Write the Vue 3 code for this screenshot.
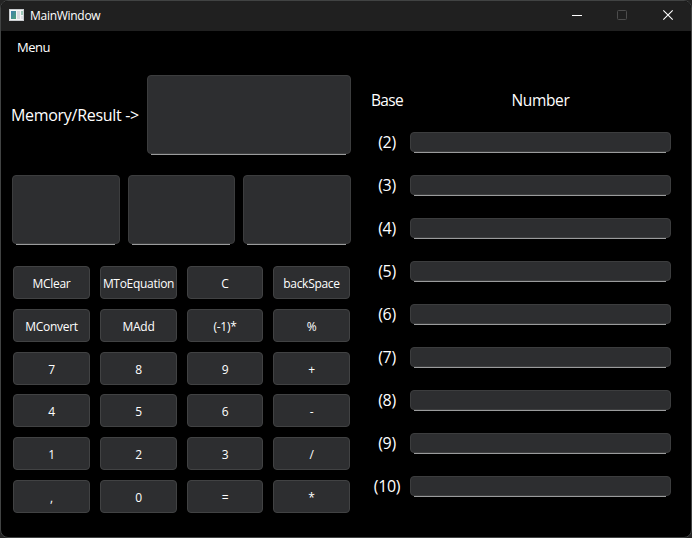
<script setup>
const keys = [
  'MClear', 'MToEquation', 'C', 'backSpace',
  'MConvert', 'MAdd', '(-1)*', '%',
  '7', '8', '9', '+',
  '4', '5', '6', '-',
  '1', '2', '3', '/',
  ',', '0', '=', '*',
]
const bases = [2, 3, 4, 5, 6, 7, 8, 9, 10]
</script>

<template>
  <div class="desktop">
    <div class="window">
      <header class="titlebar">
        <svg class="app-icon" width="15" height="12" viewBox="0 0 15 12">
          <defs>
            <linearGradient id="pane" x1="0" y1="0" x2="1" y2="1">
              <stop offset="0" stop-color="#3c7fae" />
              <stop offset="1" stop-color="#4fa178" />
            </linearGradient>
          </defs>
          <rect width="15" height="12" fill="#c9cccf" />
          <rect x="1" y="1" width="13" height="10" fill="#f4f5f6" />
          <rect x="2" y="2" width="5" height="8" fill="url(#pane)" />
          <rect x="8" y="2" width="3" height="8" fill="#d9dbe0" />
          <rect x="12" y="2" width="2" height="4" fill="#9cc8b8" />
          <rect x="12" y="7" width="2" height="3" fill="#dfe2e6" />
        </svg>
        <span class="title">MainWindow</span>
        <svg class="controls" width="138" height="30" viewBox="0 0 138 30" fill="none">
          <path d="M19 14.5H29" stroke="#fff" />
          <rect x="64.5" y="9.500" width="9" height="9" rx="1" stroke="#4d4d4d" />
          <path d="M110.300 9.300L119.700 18.700M119.700 9.300L110.300 18.700" stroke="#fff" stroke-width="1.100" />
        </svg>
      </header>
      <nav class="menubar"><span class="menu">Menu</span></nav>
      <main class="content">
        <section class="calc">
          <div class="memory">
            <span class="label mem-label">Memory/Result -&gt;</span>
            <div class="field"></div>
          </div>
          <div class="operands">
            <div v-for="n in 3" :key="n" class="field"></div>
          </div>
          <div class="keys">
            <button v-for="k in keys" :key="k" class="key"><span>{{ k }}</span></button>
          </div>
        </section>
        <section class="bases">
          <span class="label head base-head">Base</span>
          <span class="label head">Number</span>
          <template v-for="b in bases" :key="b">
            <span class="label">({{ b }})</span>
            <div class="field"></div>
          </template>
        </section>
      </main>
    </div>
  </div>
</template>

<style>
body {
  background: #242424;
}
</style>

<style scoped>
.desktop {
  width: 692px;
  height: 538px;
  background: #242424;
  font-family: "Open Sans", "Noto Sans", sans-serif;
  color: #fff;
}
.window {
  box-sizing: border-box;
  width: 692px;
  height: 538px;
  border: 1px solid #414343;
  border-radius: 8px;
  background: #000;
  overflow: hidden;
}
.titlebar {
  height: 30px;
  display: flex;
  align-items: center;
  background: #202020;
}
.app-icon {
  margin: 0 6px 2px 8px;
}
.title {
  font-size: 12px;
  line-height: 30px;
  letter-spacing: -0.28px;
}
.controls {
  margin-left: auto;
}
.menubar {
  height: 34px;
  padding-left: 16px;
}
.menu {
  font-size: 13px;
  line-height: 33px;
  letter-spacing: -0.5px;
}
.content {
  display: flex;
}
.calc {
  width: 340px;
  padding: 10px 0 0 10px;
}
.label {
  font-size: 16px;
  line-height: 20px;
  letter-spacing: -0.3px;
  white-space: nowrap;
}
.head {
  padding-top: 1px;
  font-size: 15.5px;
  letter-spacing: -0.35px;
}
.base-head {
  letter-spacing: -0.7px;
}
.field {
  box-sizing: border-box;
  position: relative;
  border: 1px solid #3c3d3e;
  border-radius: 4px;
  background: #2d2e30;
}
.field::after {
  content: "";
  position: absolute;
  left: 3px;
  right: 4px;
  bottom: -2px;
  height: 1px;
  background: #9a9b9c;
}
.memory {
  display: flex;
  align-items: center;
  height: 79px;
}
.mem-label {
  width: 136px;
}
.memory .field {
  width: 204px;
  height: 79px;
}
.operands {
  display: grid;
  grid-template-columns: 108px 107px 108px;
  gap: 8px;
  height: 69px;
  margin: 21px 0 0 1px;
}
.keys {
  display: grid;
  grid-template-columns: 77px 77px 76px 77px;
  grid-template-rows: repeat(6, 33px);
  column-gap: 10px;
  row-gap: 9.8px;
  margin: 22px 0 0 2px;
}
.key {
  display: flex;
  align-items: center;
  justify-content: center;
  margin: 0;
  padding: 3px 0 0;
  border: 1px solid #414243;
  border-radius: 4px;
  background: #2d2e30;
  color: #fff;
  font-family: inherit;
  font-size: 12px;
  line-height: 16px;
  letter-spacing: -0.3px;
}
.bases {
  display: grid;
  grid-template-columns: 46px 261px;
  grid-template-rows: 20px repeat(9, 20px);
  row-gap: 23px;
  justify-items: center;
  margin: 24px 0 0 13px;
}
.bases .field {
  width: 261px;
  height: 20px;
}
</style>
